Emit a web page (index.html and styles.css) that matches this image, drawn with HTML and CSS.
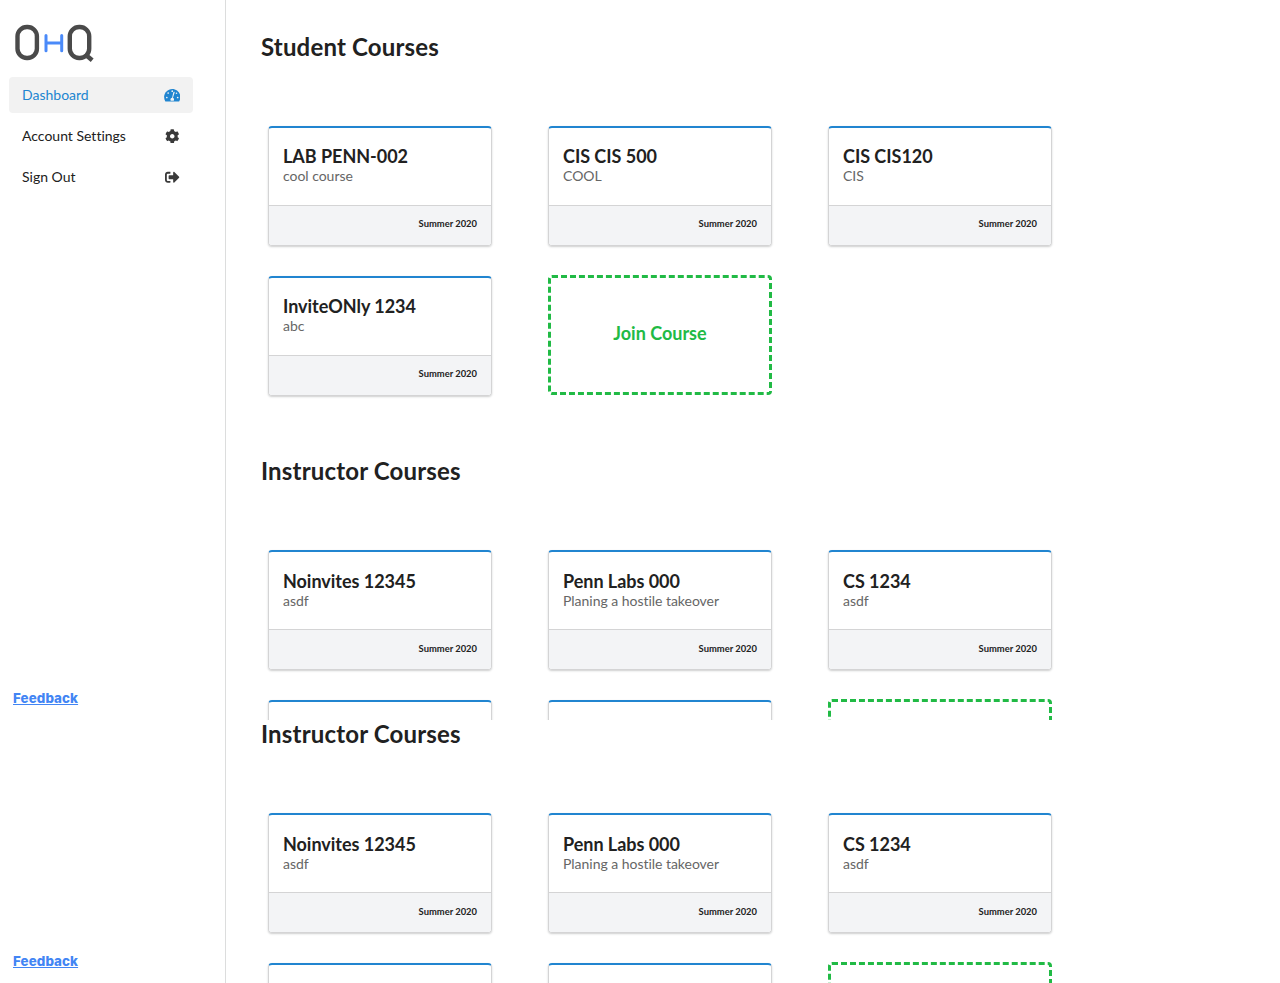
FILE: index.html
```html
<!DOCTYPE html>
<html lang="en">
<head>
<meta charset="utf-8">
<title>OHQ Dashboard</title>
<link rel="stylesheet" href="styles.css">
</head>
<body>
<div class="view view-full">
  <aside class="sidebar">
    <svg class="logo" width="80" height="40" viewBox="0 0 80 40" fill="none" stroke="#4a4a4a" stroke-width="4.4">
      <rect x="2.5" y="4" width="19.4" height="31" rx="9.3"/>
      <rect x="54.8" y="4" width="19.4" height="31" rx="9.3"/>
      <path d="M70 31.300l7.200 6"/>
      <path d="M31 12.500v15.300M46.700 12.500v15.300M31 20H46.700" stroke="#4a8af9" stroke-width="3" stroke-linecap="round"/>
    </svg>
    <nav class="menu">
      <a class="item active">Dashboard
        <svg class="icon" width="16.5" height="14.5" viewBox="0 0 576 512"><path fill="currentColor" d="M288 32C129 32 0 161 0 320c0 53 14 102 39 145 6 9 16 15 27 15h444c11 0 21-6 27-15 25-43 39-92 39-145C576 161 447 32 288 32z"/><g fill="#f2f2f2"><circle cx="288" cy="112" r="30"/><circle cx="144" cy="176" r="30"/><circle cx="96" cy="336" r="30"/><circle cx="480" cy="336" r="30"/><circle cx="438" cy="186" r="28"/><path d="M357 130c13 4 20 18 16 31l-61 183c25 12 40 38 40 64 0 14-4 28-11 40H235c-7-12-11-26-11-40 0-33 25-61 58-64l45-198c4-12 18-20 30-16z"/></g></svg>
      </a>
      <a class="item">Account Settings
        <svg class="icon" width="16.5" height="14.5" viewBox="0 0 512 512"><path fill="currentColor" d="M487.4 315.7l-42.6-24.6c4.3-23.2 4.3-47 0-70.2l42.6-24.6c4.9-2.8 7.1-8.6 5.5-14-11.1-35.6-30-67.8-54.7-94.6-3.8-4.1-10-5.1-14.8-2.3L380.8 110c-17.9-15.4-38.5-27.3-60.8-35.1V25.800c0-5.600-3.900-10.500-9.400-11.700-36.700-8.200-74.300-7.800-109.200 0-5.500 1.200-9.400 6.100-9.400 11.700V75c-22.200 7.900-42.800 19.800-60.800 35.100L88.700 85.500c-4.900-2.800-11-1.900-14.800 2.300-24.700 26.700-43.600 58.900-54.700 94.600-1.700 5.400.6 11.200 5.500 14L67.300 221c-4.300 23.200-4.300 47 0 70.200l-42.600 24.600c-4.900 2.800-7.100 8.600-5.500 14 11.100 35.600 30 67.800 54.700 94.600 3.800 4.100 10 5.100 14.800 2.300l42.600-24.600c17.900 15.400 38.500 27.300 60.800 35.100v49.200c0 5.600 3.900 10.500 9.400 11.700 36.700 8.200 74.300 7.800 109.200 0 5.500-1.200 9.400-6.100 9.400-11.700v-49.200c22.200-7.900 42.800-19.800 60.800-35.100l42.600 24.600c4.900 2.800 11 1.900 14.800-2.300 24.700-26.700 43.600-58.900 54.700-94.600 1.500-5.500-.7-11.300-5.600-14.100zM256 336c-44.100 0-80-35.900-80-80s35.900-80 80-80 80 35.900 80 80-35.900 80-80 80z"/></svg>
      </a>
      <a class="item">Sign Out
        <svg class="icon" width="16.5" height="14.5" viewBox="0 0 512 512"><path fill="currentColor" d="M497 273L329 441c-15 15-41 4.500-41-17v-96H152c-13.300 0-24-10.700-24-24v-96c0-13.300 10.700-24 24-24h136V88c0-21.400 25.900-32 41-17l168 168c9.300 9.400 9.300 24.600 0 34zM192 436v-40c0-6.600-5.400-12-12-12H96c-17.700 0-32-14.300-32-32V160c0-17.700 14.300-32 32-32h84c6.600 0 12-5.400 12-12V76c0-6.600-5.400-12-12-12H96c-53 0-96 43-96 96v192c0 53 43 96 96 96h84c6.600 0 12-5.400 12-12z"/></svg>
      </a>
    </nav>
    <a class="feedback">Feedback</a>
  </aside>
  <main class="content">
    <h2 class="heading">Student Courses</h2>
    <div class="grid grid-student">
      <div class="card"><div class="info"><h3>LAB PENN-002</h3><p>cool course</p></div><div class="term">Summer 2020</div></div>
      <div class="card"><div class="info"><h3>CIS CIS 500</h3><p>COOL</p></div><div class="term">Summer 2020</div></div>
      <div class="card"><div class="info"><h3>CIS CIS120</h3><p>CIS</p></div><div class="term">Summer 2020</div></div>
      <div class="card"><div class="info"><h3>InviteONly 1234</h3><p>abc</p></div><div class="term">Summer 2020</div></div>
      <div class="join">Join Course</div>
    </div>
    <h2 class="heading">Instructor Courses</h2>
    <div class="grid grid-instructor">
      <div class="card"><div class="info"><h3>Noinvites 12345</h3><p>asdf</p></div><div class="term">Summer 2020</div></div>
      <div class="card"><div class="info"><h3>Penn Labs 000</h3><p>Planing a hostile takeover</p></div><div class="term">Summer 2020</div></div>
      <div class="card"><div class="info"><h3>CS 1234</h3><p>asdf</p></div><div class="term">Summer 2020</div></div>
      <div class="card"></div>
      <div class="card"></div>
      <div class="join"></div>
    </div>
  </main>
</div>
<div class="view view-rest">
  <aside class="sidebar">
    <a class="feedback">Feedback</a>
  </aside>
  <main class="content">
    <h2 class="heading">Instructor Courses</h2>
    <div class="grid grid-instructor">
      <div class="card"><div class="info"><h3>Noinvites 12345</h3><p>asdf</p></div><div class="term">Summer 2020</div></div>
      <div class="card"><div class="info"><h3>Penn Labs 000</h3><p>Planing a hostile takeover</p></div><div class="term">Summer 2020</div></div>
      <div class="card"><div class="info"><h3>CS 1234</h3><p>asdf</p></div><div class="term">Summer 2020</div></div>
      <div class="card"></div>
      <div class="card"></div>
      <div class="join"></div>
    </div>
  </main>
</div>
</body>
</html>
```
FILE: styles.css
```css
* { box-sizing: border-box; }
body {
  margin: 0;
  background: #fff;
  color: #212121;
  font: 14px/20px Lato, "Liberation Sans", sans-serif;
  font-variant-ligatures: none;
}
h2, h3, p { margin: 0; }
.view { display: flex; overflow: hidden; }
.view-full { height: 720px; }
.view-rest { height: 263px; }
.sidebar {
  display: flex;
  flex-direction: column;
  flex: none;
  width: 226px;
  padding: 23px 32px 12px 9px;
  border-right: 1px solid #dcdddd;
}
.view-rest .sidebar { padding-top: 0; }
.logo { flex: none; margin: 0 0 14px 6px; }
.menu { display: flex; flex-direction: column; gap: 5px; }
.item {
  display: flex;
  align-items: center;
  justify-content: space-between;
  height: 36px;
  padding: 0 13px;
  border-radius: 4px;
}
.item.active { background: #f2f2f2; color: #2185d0; }
.icon { flex: none; color: #3a3a3a; }
.active .icon { color: #2185d0; }
.feedback {
  margin: auto auto 0 4px;
  color: #4285f4;
  font: 800 13.33px/20px Inter, sans-serif;
  letter-spacing: .1px;
  text-decoration: underline;
}
.content { flex: 1; padding: 31px 0 0 35px; }
.view-rest .content { padding-top: 0; }
.heading { font-size: 24px; line-height: 31px; letter-spacing: .17px; }
.view-rest .heading { line-height: 27px; }
.grid {
  display: grid;
  grid-template-columns: repeat(3, 224px);
  grid-auto-rows: 120px;
  gap: 30px 56px;
  padding: 64px 0 0 7px;
}
.view-rest .grid { padding-top: 66px; }
.grid-student { margin-bottom: 59px; }
.card {
  display: flex;
  flex-direction: column;
  border: 1px solid #d4d4d5;
  border-top: 2px solid #2185d0;
  border-radius: 4px;
  box-shadow: 0 1px 2px rgba(34, 36, 38, .22);
  overflow: hidden;
}
.info { flex: 1; padding: 18px 14px 0; }
.grid-instructor .info { padding-top: 19px; }
.info h3 { font-size: 18px; line-height: 21px; letter-spacing: -.03px; }
.info p { color: #666; line-height: 18px; letter-spacing: -.03px; }
.term {
  height: 40px;
  padding-right: 14px;
  border-top: 1px solid #d4d4d5;
  background: #f3f4f6;
  color: #212121;
  font-size: 9.4px;
  font-weight: 700;
  line-height: 35px;
  text-align: right;
}
.grid-instructor .term { line-height: 37px; }
.join {
  display: flex;
  align-items: center;
  justify-content: center;
  margin: -1px 0 1px;
  border: 3px dashed #21ba45;
  border-radius: 4px;
  color: #21ba45;
  font-size: 18px;
  font-weight: 700;
  padding-bottom: 4px;
}
```
